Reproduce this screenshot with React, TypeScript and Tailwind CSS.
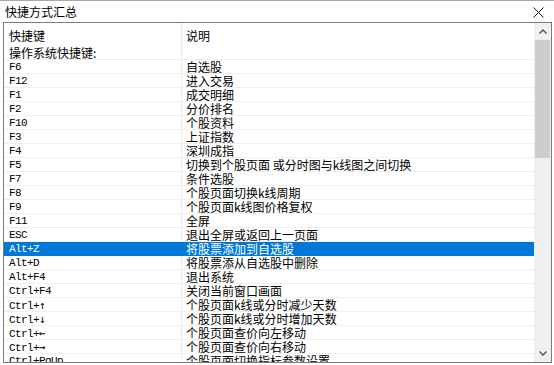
import React from "react";

const rows: [string, string, string?][] = [
  ["F6", "自选股"],
  ["F12", "进入交易"],
  ["F1", "成交明细"],
  ["F2", "分价排名"],
  ["F10", "个股资料"],
  ["F3", "上证指数"],
  ["F4", "深圳成指"],
  ["F5", "切换到个股页面 或分时图与k线图之间切换"],
  ["F7", "条件选股"],
  ["F8", "个股页面切换k线周期"],
  ["F9", "个股页面k线图价格复权"],
  ["F11", "全屏"],
  ["ESC", "退出全屏或返回上一页面"],
  ["Alt+Z", "将股票添加到自选股"],
  ["Alt+D", "将股票添从自选股中删除"],
  ["Alt+F4", "退出系统"],
  ["Ctrl+F4", "关闭当前窗口画面"],
  ["Ctrl+", "个股页面k线或分时减少天数", "↑"],
  ["Ctrl+", "个股页面k线或分时增加天数", "↓"],
  ["Ctrl+", "个股页面查价向左移动", "←"],
  ["Ctrl+", "个股页面查价向右移动", "→"],
  ["Ctrl+PgUp", "个股页面切换指标参数设置"],
];

export default function App() {
  return (
    <div className="w-[554px] h-[365px] bg-white overflow-hidden flex flex-col text-black font-[family-name:Noto_Sans_CJK_SC,sans-serif]">
      {/* title bar */}
      <div className="h-[22px] shrink-0 border-t border-[#a8a8a8] flex items-center justify-between pl-[5px] pr-[10px]">
        <span className="text-[12px] leading-[14px]">快捷方式汇总</span>
        <svg width="11" height="11" viewBox="0 0 11 11" className="mt-[1px]">
          <path d="M0.5 0.5 L10.5 10.5 M10.5 0.5 L0.5 10.5" stroke="#1a1a1a" strokeWidth="1" />
        </svg>
      </div>
      {/* body */}
      <div className="flex-1 pl-[3px] pr-[2px] pb-[2px] flex min-h-0">
        <div className="flex-1 border border-[#7a7a7a] flex min-h-0 bg-white">
          {/* list */}
          <div className="flex-1 overflow-hidden flex flex-col">
            <div className="h-[23px] shrink-0 flex text-[12px]">
              <div className="w-[178px] border-r border-[#e8e8e8] pl-[5px] flex items-center pt-[2px]">快捷键</div>
              <div className="flex-1 pl-[4px] flex items-center pt-[2px]">说明</div>
            </div>
            <div className="h-[14px] shrink-0 flex border-b border-[#f0f0f0] text-[12px] leading-[13px]">
              <div className="w-[178px] border-r border-[#e8e8e8] pl-[5px] whitespace-nowrap">操作系统快捷键:</div>
              <div className="flex-1" />
            </div>
            {rows.map(([k, d, arrow], i) => {
              const sel = k === "Alt+Z";
              return (
                <div
                  key={i}
                  className={`h-[14px] shrink-0 flex border-b ${sel ? "bg-[#0078d7] border-[#0078d7] text-white" : "border-[#f0f0f0]"}`}
                >
                  <div
                    className={`w-[178px] border-r ${sel ? "border-[#0078d7]" : "border-[#e8e8e8]"} pl-[5px] pt-[1px] font-[family-name:Liberation_Mono,Courier_New,monospace] text-[11px] leading-[13px] tracking-[-0.6px] whitespace-nowrap`}
                  >
                    {k}
                    {arrow && (
                      <span className="font-[family-name:DejaVu_Sans_Mono,monospace] text-[11px] tracking-normal">{arrow}</span>
                    )}
                  </div>
                  <div className="flex-1 pl-[4px] text-[12px] leading-[13px] whitespace-nowrap">{d}</div>
                </div>
              );
            })}
          </div>
          {/* scrollbar */}
          <div className="w-[17px] shrink-0 bg-[#f0f0f0] flex flex-col">
            <div className="h-[17px] flex items-center justify-center">
              <svg width="8" height="5" viewBox="0 0 8 5">
                <path d="M0.5 4.5 L4 1 L7.5 4.5" stroke="#505050" strokeWidth="1.4" fill="none" />
              </svg>
            </div>
            <div className="px-[1px]">
              <div className="h-[118px] bg-[#cdcdcd]" />
            </div>
            <div className="flex-1" />
            <div className="h-[17px] flex items-center justify-center">
              <svg width="8" height="5" viewBox="0 0 8 5">
                <path d="M0.5 0.5 L4 4 L7.5 0.5" stroke="#505050" strokeWidth="1.4" fill="none" />
              </svg>
            </div>
          </div>
        </div>
      </div>
    </div>
  );
}
